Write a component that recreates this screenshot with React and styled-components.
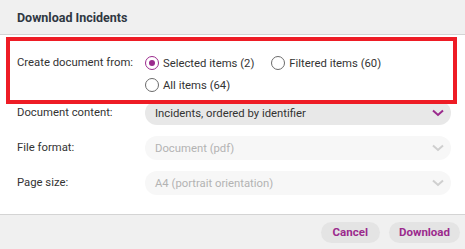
import styled, { createGlobalStyle } from "styled-components";

const GlobalStyle = createGlobalStyle`
  body {
    margin: 0;
    font-family: Roboto, "Liberation Sans", sans-serif;
    background: #ffffff;
  }
`;

const PURPLE = "#9b2a8d";

const Dialog = styled.div`
  width: 465px;
  height: 249px;
  display: flex;
  flex-direction: column;
  background: #ffffff;
  overflow: hidden;
`;

const Header = styled.div`
  height: 34px;
  display: flex;
  align-items: center;
  padding-left: 17px;
  background: #f0f0f0;
  border-bottom: 1px solid #d4d4d4;
`;

const Title = styled.h1`
  margin: 0;
  font-size: 12.5px;
  font-weight: 700;
  color: #2f3742;
`;

const Body = styled.div`
  flex: 1;
  padding: 2px 14px 0 6px;
`;

const Highlight = styled.div`
  position: relative;
  z-index: 1;
  border: 4px solid #ee1c25;
  padding: 11px 0 4px 7px;
  margin: 0 -6px -3px 0;
`;

const Row = styled.div`
  display: grid;
  grid-template-columns: 128px 1fr;
  align-items: ${(p) => (p.$top ? "start" : "center")};
  padding-left: ${(p) => (p.$inset ? "0" : "11px")};
  margin-top: ${(p) => p.$gap || 0}px;
`;

const Label = styled.div`
  font-size: 11.3px;
  color: #333333;
  line-height: 22px;
`;

const Options = styled.div`
  display: flex;
  flex-wrap: wrap;
  column-gap: 17px;
  width: 250px;
`;

const Option = styled.label`
  display: flex;
  align-items: center;
  gap: 4px;
  height: 22px;
  font-size: 11.3px;
  color: #333333;
`;

const Radio = styled.span`
  width: 14px;
  height: 14px;
  box-sizing: border-box;
  border-radius: 50%;
  border: ${(p) => (p.$checked ? `1.5px solid ${PURPLE}` : "1px solid #6b6b6b")};
  display: flex;
  align-items: center;
  justify-content: center;
  background: #fff;

  &::after {
    content: "";
    width: 6px;
    height: 6px;
    border-radius: 50%;
    background: ${(p) => (p.$checked ? PURPLE : "transparent")};
  }
`;

const Select = styled.div`
  height: 24px;
  border-radius: 12px;
  background: ${(p) => (p.$disabled ? "#f7f7f7" : "#e8e8e8")};
  color: ${(p) => (p.$disabled ? "#b3b3b3" : "#333333")};
  font-size: 11.3px;
  display: flex;
  align-items: center;
  justify-content: space-between;
  padding: 0 7px 0 10px;
`;

const Footer = styled.div`
  height: 34px;
  background: #f0f0f0;
  border-top: 1px solid #d4d4d4;
  display: flex;
  align-items: center;
  justify-content: flex-end;
  gap: 9px;
  padding-right: 5px;
`;

const Button = styled.button`
  height: 21px;
  border: none;
  border-radius: 11px;
  background: #e4e4e4;
  color: ${PURPLE};
  font-family: Roboto, "Liberation Sans", sans-serif;
  font-size: 11.5px;
  font-weight: 700;
  padding: 0 ${(p) => p.$pad || 13}px;
  cursor: pointer;
`;

function Chevron({ disabled }) {
  return (
    <svg width="12" height="8" viewBox="0 0 12 8">
      <path
        d="M1 1.5 L6 6 L11 1.5"
        fill="none"
        stroke={disabled ? "#cfcfcf" : PURPLE}
        strokeWidth="2"
      />
    </svg>
  );
}

function Field({ label, value, disabled, gap }) {
  return (
    <Row $gap={gap}>
      <Label>{label}</Label>
      <Select $disabled={disabled}>
        <span>{value}</span>
        <Chevron disabled={disabled} />
      </Select>
    </Row>
  );
}

export default function App() {
  return (
    <>
      <GlobalStyle />
      <Dialog>
        <Header>
          <Title>Download Incidents</Title>
        </Header>
        <Body>
          <Highlight>
            <Row $top $inset>
              <Label>Create document from:</Label>
              <Options>
                <Option>
                  <Radio $checked />
                  Selected items (2)
                </Option>
                <Option>
                  <Radio />
                  Filtered items (60)
                </Option>
                <Option>
                  <Radio />
                  All items (64)
                </Option>
              </Options>
            </Row>
          </Highlight>
          <Field label="Document content:" value="Incidents, ordered by identifier" />
          <Field label="File format:" value="Document (pdf)" disabled gap={11} />
          <Field label="Page size:" value="A4 (portrait orientation)" disabled gap={11} />
        </Body>
        <Footer>
          <Button $pad={12}>Cancel</Button>
          <Button $pad={10}>Download</Button>
        </Footer>
      </Dialog>
    </>
  );
}
